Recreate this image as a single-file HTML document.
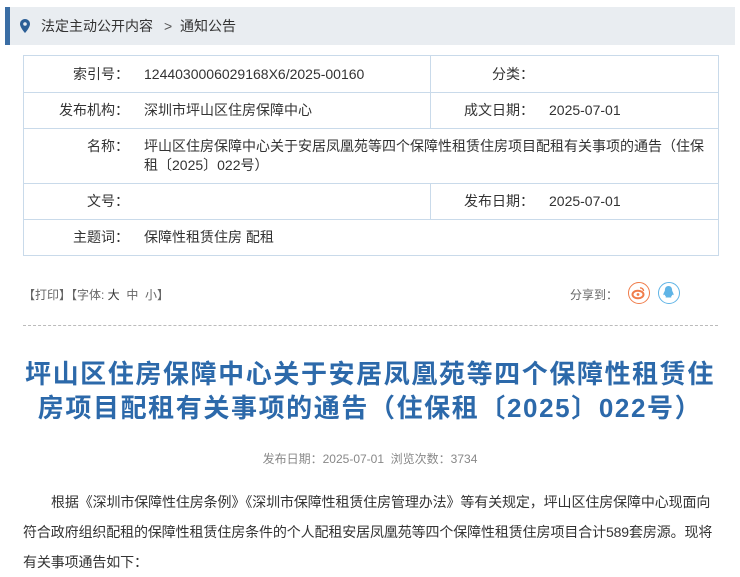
<!DOCTYPE html>
<html><head><meta charset="utf-8"><style>
*{margin:0;padding:0;box-sizing:border-box}
body{width:740px;height:574px;overflow:hidden;background:#fff;font-family:"Liberation Sans","Noto Sans CJK SC",sans-serif;color:#333;position:relative}
.bc{position:absolute;left:5px;top:7px;width:730px;height:38px;background:#e9edf1;border-left:5px solid #3b6ea5;font-size:14px;line-height:38px;color:#333}
.bc svg{position:absolute;left:10px;top:12px}
.bc span{position:absolute;top:0}
table{position:absolute;left:23px;top:55px;width:696px;border-collapse:collapse;font-size:14px;color:#333;table-layout:fixed}
td{border:1px solid #c9daea;vertical-align:middle;white-space:nowrap;overflow:hidden;padding:0;line-height:19px}
.lb{display:inline-block;text-align:right;vertical-align:baseline}
.a{width:105px;margin-right:15px}
.b{width:103px;margin-right:15px}
.tools{position:absolute;top:286px;left:23px;font-size:12px;color:#666}
.share{position:absolute;top:286px;left:570px;font-size:12px;color:#666}
.ic{position:absolute;top:282px;width:22px;height:22px;border-radius:50%}
.hr{position:absolute;left:23px;top:325px;width:695px;border-top:1px dashed #bbb}
h1{position:absolute;left:0;top:357px;width:740px;text-align:center;font-size:26px;line-height:34px;color:#2c69aa;font-weight:bold;letter-spacing:1.6px}
.meta{position:absolute;top:450px;left:0;width:740px;text-align:center;font-size:12px;color:#888}
.body{position:absolute;left:23px;top:487px;width:720px;font-size:14px;line-height:30px;color:#333;white-space:nowrap;letter-spacing:-0.12px}
</style></head><body>
<div class="bc"><svg width="10" height="14" viewBox="0 0 10 14"><path d="M5 0C2.2 0 0 2.2 0 5c0 3.5 5 9 5 9s5-5.5 5-9C10 2.2 7.8 0 5 0z" fill="#2c5f96"/><circle cx="5" cy="5" r="1.8" fill="#e9edf1"/></svg><span style="left:31px">法定主动公开内容</span><span style="left:154px;color:#555">&gt;</span><span style="left:170px">通知公告</span></div>
<table>
<colgroup><col style="width:407px"><col></colgroup>
<tr style="height:37px"><td><span class="lb a">索引号：</span>1244030006029168X6/2025-00160</td><td><span class="lb b">分类：</span></td></tr>
<tr style="height:36px"><td><span class="lb a">发布机构：</span>深圳市坪山区住房保障中心</td><td><span class="lb b">成文日期：</span>2025-07-01</td></tr>
<tr style="height:55px"><td colspan="2"><span class="lb a" style="vertical-align:top">名称：</span><span style="display:inline-block;vertical-align:top">坪山区住房保障中心关于安居凤凰苑等四个保障性租赁住房项目配租有关事项的通告（住保<br>租〔2025〕022号）</span></td></tr>
<tr style="height:36px"><td><span class="lb a">文号：</span></td><td><span class="lb b">发布日期：</span>2025-07-01</td></tr>
<tr style="height:36px"><td colspan="2"><span class="lb a">主题词：</span>保障性租赁住房 配租</td></tr>
</table>
<div class="tools">【打印】【字体: <span style="color:#333">大</span>&nbsp; 中&nbsp; 小】</div>
<div class="share">分享到：</div>
<div class="ic" style="left:628px;border:1.5px solid #f07c4a"><svg width="19" height="19" viewBox="0 0 19 19"><ellipse cx="9" cy="11.5" rx="5.5" ry="3.8" fill="none" stroke="#f07c4a" stroke-width="2"/><circle cx="9" cy="11.5" r="1.4" fill="#f07c4a"/><path d="M11 5a3 3 0 0 1 3.5 3" fill="none" stroke="#f07c4a" stroke-width="1.4"/></svg></div>
<div class="ic" style="left:658px;border:1.5px solid #5fb4e6"><svg width="19" height="19" viewBox="0 0 19 19"><path d="M9.5 3c-2.5 0-3.6 2-3.6 4.2 0 1-1.5 2.8-1.5 4.3 0 1 .6.8 1.2 0 .2 1 .8 1.6 1.5 2-1 .4-1 1.3 2.4 1h0c3.4.3 3.4-.6 2.4-1 .7-.4 1.3-1 1.5-2 .6.8 1.2 1 1.2 0 0-1.5-1.5-3.3-1.5-4.3C13.1 5 12 3 9.5 3z" fill="#5fb4e6"/></svg></div>
<div class="hr"></div>
<h1>坪山区住房保障中心关于安居凤凰苑等四个保障性租赁住<br>房项目配租有关事项的通告（住保租〔2025〕022号）</h1>
<div class="meta">发布日期：2025-07-01&nbsp; 浏览次数：3734</div>
<div class="body"><span style="padding-left:28px"></span>根据《深圳市保障性住房条例》《深圳市保障性租赁住房管理办法》等有关规定，坪山区住房保障中心现面向<br>符合政府组织配租的保障性租赁住房条件的个人配租安居凤凰苑等四个保障性租赁住房项目合计589套房源。现将<br>有关事项通告如下：</div>
</body></html>
